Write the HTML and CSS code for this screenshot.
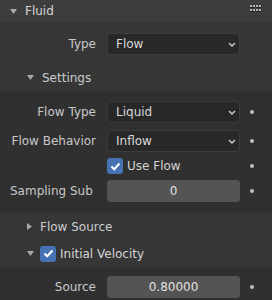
FILE: index.html
```html
<!DOCTYPE html>
<html lang="en">
<head>
    <meta charset="UTF-8">
    <title>Fluid Panel</title>
    <link rel="stylesheet" href="styles.css">
</head>
<body>

    <div class="panel">
        <!-- Panel header -->
        <div class="panel-header">
            <svg class="tri" width="7" height="5" viewBox="0 0 7 5"><polygon points="0,0 7,0 3.5,5" fill="#a8a8a8"/></svg>
            <span class="panel-title">Fluid</span>
            <svg class="grip" width="12" height="8" viewBox="0 0 12 8">
                <g fill="#1e1e1e">
                    <rect x="0" y="1" width="2" height="2"/><rect x="3" y="1" width="2" height="2"/>
                    <rect x="6" y="1" width="2" height="2"/><rect x="9" y="1" width="2" height="2"/>
                    <rect x="0" y="5" width="2" height="2"/><rect x="3" y="5" width="2" height="2"/>
                    <rect x="6" y="5" width="2" height="2"/><rect x="9" y="5" width="2" height="2"/>
                </g>
                <g fill="#b4b4b4">
                    <rect x="0" y="0" width="2" height="2"/><rect x="3" y="0" width="2" height="2"/>
                    <rect x="6" y="0" width="2" height="2"/><rect x="9" y="0" width="2" height="2"/>
                    <rect x="0" y="4" width="2" height="2"/><rect x="3" y="4" width="2" height="2"/>
                    <rect x="6" y="4" width="2" height="2"/><rect x="9" y="4" width="2" height="2"/>
                </g>
            </svg>
        </div>

        <div class="type-area">
            <div class="prop-row">
                <div class="label">Type</div>
                <div class="dropdown">
                    <span>Flow</span>
                    <svg class="chev" width="8" height="5" viewBox="0 0 8 5"><polyline points="1,1 4,4 7,1" fill="none" stroke="#d0d0d0" stroke-width="1.4"/></svg>
                </div>
                <div></div>
            </div>
        </div>

        <!-- Settings subpanel -->
        <div class="sub-header">
            <svg class="tri" width="7" height="5" viewBox="0 0 7 5"><polygon points="0,0 7,0 3.5,5" fill="#a8a8a8"/></svg>
            <span class="sub-title">Settings</span>
        </div>
        <div class="sub-body settings-body">
            <div class="prop-row">
                <div class="label">Flow Type</div>
                <div class="dropdown">
                    <span>Liquid</span>
                    <svg class="chev" width="8" height="5" viewBox="0 0 8 5"><polyline points="1,1 4,4 7,1" fill="none" stroke="#d0d0d0" stroke-width="1.4"/></svg>
                </div>
                <div class="deco"><span class="dot"></span></div>
            </div>
            <div class="prop-row spaced">
                <div class="label">Flow Behavior</div>
                <div class="dropdown">
                    <span>Inflow</span>
                    <svg class="chev" width="8" height="5" viewBox="0 0 8 5"><polyline points="1,1 4,4 7,1" fill="none" stroke="#d0d0d0" stroke-width="1.4"/></svg>
                </div>
                <div class="deco"><span class="dot"></span></div>
            </div>
            <div class="prop-row short">
                <div></div>
                <div class="check-line">
                    <span class="checkbox">
                        <svg width="11" height="9" viewBox="0 0 11 9"><polyline points="1.5,4.5 4.2,7.2 9.5,1.5" fill="none" stroke="#ffffff" stroke-width="2"/></svg>
                    </span>
                    <span class="check-text">Use Flow</span>
                </div>
                <div class="deco"><span class="dot"></span></div>
            </div>
            <div class="prop-row after-check">
                <div class="label clip">Sampling Sub</div>
                <div class="number">0</div>
                <div class="deco"><span class="dot"></span></div>
            </div>
        </div>

        <!-- Flow Source subpanel (closed) -->
        <div class="sub-header">
            <svg class="tri" width="5" height="7" viewBox="0 0 5 7"><polygon points="0,0 5,3.5 0,7" fill="#a8a8a8"/></svg>
            <span class="sub-title">Flow Source</span>
        </div>

        <!-- Initial Velocity subpanel -->
        <div class="sub-header">
            <svg class="tri" width="7" height="5" viewBox="0 0 7 5"><polygon points="0,0 7,0 3.5,5" fill="#a8a8a8"/></svg>
            <span class="checkbox head-check">
                <svg width="11" height="9" viewBox="0 0 11 9"><polyline points="1.5,4.5 4.2,7.2 9.5,1.5" fill="none" stroke="#ffffff" stroke-width="2"/></svg>
            </span>
            <span class="check-text">Initial Velocity</span>
        </div>
        <div class="sub-body velocity-body">
            <div class="prop-row">
                <div class="label">Source</div>
                <div class="number">0.80000</div>
                <div class="deco"><span class="dot"></span></div>
            </div>
        </div>
    </div>

</body>
</html>
```

FILE: styles.css
```css
body {
    margin: 0;
    background-color: #303030;
    font-family: "DejaVu Sans", sans-serif;
    font-size: 12px;
    color: #d4d4d4;
}

.panel {
    width: 272px;
    height: 300px;
    overflow: hidden;
}

/* Panel header */
.panel-header {
    height: 22px;
    background-color: #3d3d3d;
    display: flex;
    align-items: center;
    padding-left: 10px;
    padding-right: 10px;
}

.panel-title {
    margin-left: 8px;
    color: #d4d4d4;
}

.grip {
    margin-left: auto;
    margin-top: -4px;
}

/* Rows */
.type-area {
    background-color: #363636;
    padding-top: 11px;
    padding-bottom: 9px;
}

.prop-row {
    display: grid;
    grid-template-columns: 107px 133px 24px;
    height: 22px;
    align-items: center;
}

.prop-row.spaced {
    margin-top: 7px;
}

.prop-row.short {
    margin-top: 4px;
    height: 20px;
}

.prop-row.after-check {
    margin-top: 4px;
}

.label {
    text-align: right;
    padding-right: 11px;
    color: #c8c8c8;
    white-space: nowrap;
    overflow: hidden;
}

.label.clip {
    text-align: left;
    padding-left: 10px;
    padding-right: 4px;
}

.dropdown {
    height: 22px;
    box-sizing: border-box;
    background-color: #282828;
    border: 1px solid #3c3c3c;
    border-radius: 4px;
    display: flex;
    align-items: center;
    padding-left: 8px;
    padding-right: 3px;
    color: #d8d8d8;
}

.chev {
    margin-left: auto;
}

.number {
    height: 22px;
    background-color: #545454;
    border-radius: 4px;
    display: flex;
    align-items: center;
    justify-content: center;
    color: #e0e0e0;
}

.deco {
    display: flex;
    justify-content: center;
}

.dot {
    width: 4px;
    height: 4px;
    border-radius: 50%;
    background-color: #c0c0c0;
}

/* Checkbox */
.check-line {
    display: flex;
    align-items: center;
}

.checkbox {
    width: 16px;
    height: 16px;
    border-radius: 3px;
    background-color: #4772b3;
    display: flex;
    align-items: center;
    justify-content: center;
}

.check-text {
    margin-left: 4px;
    color: #d4d4d4;
}

/* Subpanels */
.sub-header {
    height: 27px;
    background-color: #363636;
    display: flex;
    align-items: center;
    padding-left: 27px;
}

.sub-title {
    margin-left: 8px;
    color: #cccccc;
}

.head-check {
    margin-left: 6px;
}

.sub-body {
    background-color: #303030;
}

.settings-body {
    padding-top: 10px;
    padding-bottom: 11px;
}

.velocity-body {
    padding-top: 9px;
}
```
